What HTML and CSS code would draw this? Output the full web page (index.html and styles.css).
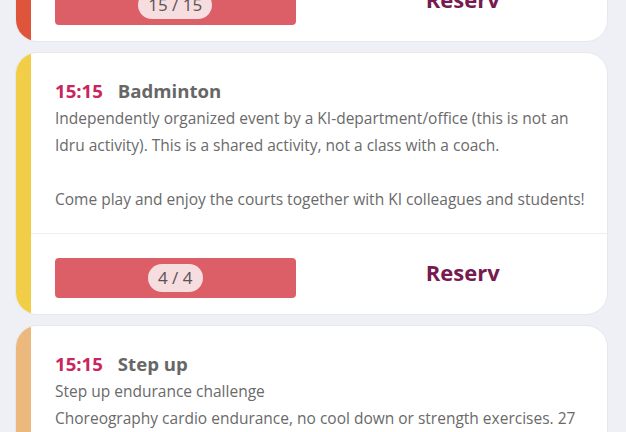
FILE: index.html
```html
<!DOCTYPE html>
<html lang="en">

<head>
  <meta charset="UTF-8">
  <meta name="viewport" content="width=device-width, initial-scale=1.0">
  <title>Activities</title>
  <link rel="stylesheet" href="styles.css">
</head>

<body>
  <div class="list">

    <div class="card">
      <div class="stripe stripe-red"></div>
      <div class="card-main">
        <div class="card-body">
          <div class="title"><span class="time">15:00</span><span class="name">Spinning</span></div>
          <p class="desc">Indoor cycling class with music and intervals.<br>Bring a towel and a water bottle.</p>
        </div>
        <div class="card-footer">
          <div class="spots"><span class="count">15 / 15</span></div>
          <div class="reserve">Reserv</div>
        </div>
      </div>
    </div>

    <div class="card">
      <div class="stripe stripe-yellow"></div>
      <div class="card-main">
        <div class="card-body">
          <div class="title"><span class="time">15:15</span><span class="name">Badminton</span></div>
          <p class="desc">Independently organized event by a KI-department/office (this is not an Idru activity). This is a shared activity, not a class with a coach.<br><br>Come play and enjoy the courts together with KI colleagues and students!</p>
        </div>
        <div class="card-footer">
          <div class="spots"><span class="count">4 / 4</span></div>
          <div class="reserve">Reserv</div>
        </div>
      </div>
    </div>

    <div class="card">
      <div class="stripe stripe-peach"></div>
      <div class="card-main">
        <div class="card-body">
          <div class="title"><span class="time">15:15</span><span class="name">Step up</span></div>
          <p class="desc">Step up endurance challenge<br>Choreography cardio endurance, no cool down or strength exercises. 27 minutes of steps and jumps to keep the heart rate up.</p>
        </div>
        <div class="card-footer">
          <div class="spots"><span class="count">20 / 20</span></div>
          <div class="reserve">Reserv</div>
        </div>
      </div>
    </div>

  </div>
</body>

</html>
```

FILE: styles.css
```css
body {
  margin: 0;
  background-color: #eef0f5;
  font-family: "Open Sans", Arial, sans-serif;
  color: #666;
  overflow: hidden;
}

.list {
  display: flex;
  flex-direction: column;
  gap: 10px;
  margin: -167px 18px 0 15px;
}

.card {
  display: flex;
  background-color: #fff;
  border: 1px solid #e6e8ee;
  border-radius: 22px;
  overflow: hidden;
}

.stripe {
  width: 15px;
  flex-shrink: 0;
}

.stripe-red {
  background-color: #df553b;
}

.stripe-yellow {
  background-color: #f2cd47;
}

.stripe-peach {
  background-color: #ebb97d;
}

.card-main {
  flex: 1;
}

.card-body {
  padding: 24px 12px 20px 24px;
  border-bottom: 1px solid #eceef2;
}

.title {
  font-size: 18.6px;
  font-weight: 700;
  line-height: 28px;
}

.time {
  color: #c9255e;
  margin-right: 15px;
}

.name {
  color: #676767;
}

.desc {
  margin: 0;
  font-size: 15.5px;
  line-height: 27px;
  color: #6a6a6a;
}

.card-footer {
  display: grid;
  grid-template-columns: 1fr 1fr;
  column-gap: 47px;
  align-items: start;
  padding: 24px 24px 16px 24px;
}

.spots {
  height: 40px;
  background-color: #dc5f67;
  border-radius: 4px;
  display: flex;
  align-items: center;
  justify-content: center;
}

.count {
  background-color: #f6dde0;
  color: #5a5152;
  font-size: 17px;
  line-height: 28px;
  padding: 0 10px;
  border-radius: 14px;
}

.reserve {
  text-align: center;
  font-size: 22px;
  font-weight: 700;
  line-height: 28px;
  color: #771a4f;
}
```
